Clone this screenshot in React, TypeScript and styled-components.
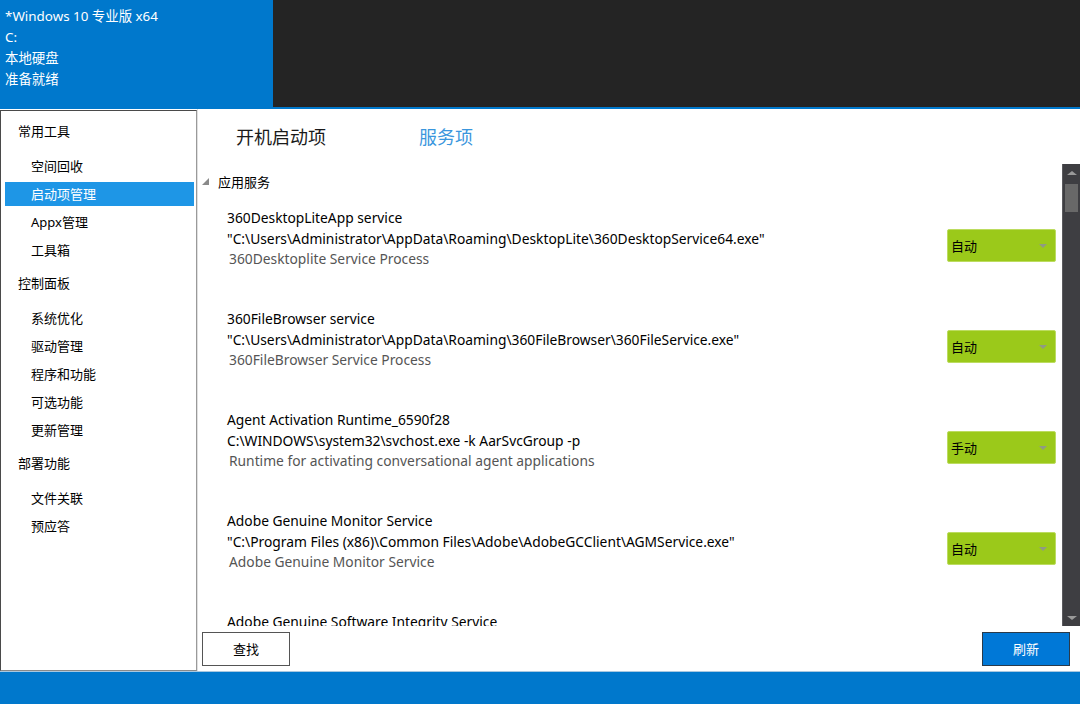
import React from 'react'
import styled, { createGlobalStyle } from 'styled-components'

const GlobalStyle = createGlobalStyle`
  html, body {
    margin: 0;
    padding: 0;
    width: 1080px;
    height: 704px;
    overflow: hidden;
    background: #ffffff;
  }
  body {
    font-family: 'Noto Sans', 'Noto Sans CJK SC', sans-serif;
    font-size: 13px;
    color: #000;
  }
`

const Shell = styled.div`
  width: 1080px;
  height: 704px;
  display: flex;
  flex-direction: column;
`

const Header = styled.header`
  display: flex;
  height: 109px;
  background: #0078cc;
`

const DiskInfo = styled.div`
  width: 273px;
  padding: 6px 0 0 5px;
  box-sizing: border-box;
  color: #fff;
  font-size: 13.4px;
  line-height: 21px;
`

const DarkArea = styled.div`
  flex: 1;
  height: 107px;
  background: #242424;
`

const Main = styled.div`
  flex: 1;
  display: flex;
  min-height: 0;
`

const Sidebar = styled.nav`
  width: 197px;
  box-sizing: border-box;
  margin-top: 1px;
  border: 1px solid #4a4a4a;
  border-right-color: #9a9a9a;
  border-bottom-color: #8a8a8a;
  padding: 10px 2px 0 4px;
  display: flex;
  flex-direction: column;
`

const GroupBlock = styled.div`
  margin-bottom: 7px;
`

const GroupTitle = styled.div`
  height: 20px;
  line-height: 20px;
  padding-left: 13px;
  margin-bottom: 13px;
`

const NavItem = styled.div<{ $active?: boolean }>`
  height: 24px;
  line-height: 24px;
  margin-bottom: 4px;
  padding-left: 26px;
  background: ${(p) => (p.$active ? '#1e96e6' : 'transparent')};
  color: ${(p) => (p.$active ? '#fff' : '#000')};
`

const Content = styled.section`
  flex: 1;
  display: flex;
  flex-direction: column;
  min-width: 0;
  border-left: 1px solid #e0e0e0;
`

const Tabs = styled.div`
  height: 55px;
  display: flex;
  align-items: center;
  padding: 0 0 2px 38px;
  box-sizing: border-box;
  gap: 93px;
`

const Tab = styled.div<{ $active?: boolean }>`
  font-size: 18px;
  font-family: 'Noto Sans CJK SC', sans-serif;
  color: ${(p) => (p.$active ? '#3a96dd' : '#1a1a1a')};
`

const ListArea = styled.div`
  height: 462px;
  display: flex;
`

const List = styled.div`
  flex: 1;
  overflow: hidden;
  padding-top: 7px;
`

const GroupHeader = styled.div`
  display: flex;
  align-items: center;
  height: 20px;
  padding-left: 4px;
  gap: 9px;
  margin-bottom: 17px;
`

const ServiceRow = styled.div`
  height: 101px;
  display: flex;
  align-items: flex-start;
  padding: 0 6px 0 29px;
`

const ServiceText = styled.div`
  flex: 1;
  font-size: 13.8px;
  line-height: 20.5px;
  white-space: nowrap;
`

const ServiceDesc = styled.div`
  color: #555;
  padding-left: 2px;
`

const Dropdown = styled.div`
  margin-top: 21px;
  width: 109px;
  height: 33px;
  box-sizing: border-box;
  background: #9bc91a;
  border: 1px solid #bcdc60;
  border-radius: 2px;
  display: flex;
  align-items: center;
  justify-content: space-between;
  padding: 0 8px 0 3px;
  font-family: 'Noto Sans CJK SC', sans-serif;
`

const Caret = styled.span`
  width: 0;
  height: 0;
  border-left: 4px solid transparent;
  border-right: 4px solid transparent;
  border-top: 4px solid #8f9a84;
`

const Scrollbar = styled.div`
  width: 18px;
  background: #3e3e42;
  border-left: 1px solid #5a5a5e;
  box-sizing: border-box;
  display: flex;
  flex-direction: column;
  align-items: center;
  padding: 7px 0 6px;
`

const ScrollThumb = styled.div`
  width: 13px;
  height: 28px;
  background: #686868;
  margin-top: 9px;
  flex: none;
`

const ScrollSpacer = styled.div`
  flex: 1;
`

const Arrow = styled.span<{ $down?: boolean }>`
  width: 0;
  height: 0;
  border-left: 5px solid transparent;
  border-right: 5px solid transparent;
  ${(p) => (p.$down ? 'border-top: 4px solid #9a9a9a;' : 'border-bottom: 4px solid #9a9a9a;')}
`

const Actions = styled.div`
  flex: 1;
  display: flex;
  align-items: center;
  justify-content: space-between;
  padding: 0 10px 0 4px;
`

const Button = styled.button<{ $primary?: boolean }>`
  width: 88px;
  height: 34px;
  box-sizing: border-box;
  padding: 0;
  line-height: 32px;
  border: 1px solid ${(p) => (p.$primary ? '#2a3a4a' : '#555')};
  background: ${(p) => (p.$primary ? '#0078d7' : '#fff')};
  color: ${(p) => (p.$primary ? '#fff' : '#000')};
  font-family: 'Noto Sans CJK SC', sans-serif;
  font-size: 13px;
  margin-top: 1px;
`

const Footer = styled.footer`
  height: 33px;
  background: #0078cc;
  border-top: 1px solid #a8c8e0;
  box-sizing: border-box;
`

const navGroups = [
  { title: '常用工具', items: ['空间回收', '启动项管理', 'Appx管理', '工具箱'] },
  { title: '控制面板', items: ['系统优化', '驱动管理', '程序和功能', '可选功能', '更新管理'] },
  { title: '部署功能', items: ['文件关联', '预应答'] },
]

// the last row is scrolled past the bottom edge, only its name peeks in
const services = [
  {
    name: '360DesktopLiteApp service',
    path: '"C:\\Users\\Administrator\\AppData\\Roaming\\DesktopLite\\360DesktopService64.exe"',
    desc: '360Desktoplite Service Process',
    mode: '自动',
  },
  {
    name: '360FileBrowser service',
    path: '"C:\\Users\\Administrator\\AppData\\Roaming\\360FileBrowser\\360FileService.exe"',
    desc: '360FileBrowser Service Process',
    mode: '自动',
  },
  {
    name: 'Agent Activation Runtime_6590f28',
    path: 'C:\\WINDOWS\\system32\\svchost.exe -k AarSvcGroup -p',
    desc: 'Runtime for activating conversational agent applications',
    mode: '手动',
  },
  {
    name: 'Adobe Genuine Monitor Service',
    path: '"C:\\Program Files (x86)\\Common Files\\Adobe\\AdobeGCClient\\AGMService.exe"',
    desc: 'Adobe Genuine Monitor Service',
    mode: '自动',
  },
  {
    name: 'Adobe Genuine Software Integrity Service',
    path: '',
    desc: '',
    mode: '',
  },
]

const App: React.FC = () => {
  return (
    <Shell>
      <GlobalStyle />
      <Header>
        <DiskInfo>
          <div>*Windows 10 专业版 x64</div>
          <div>C:</div>
          <div>本地硬盘</div>
          <div>准备就绪</div>
        </DiskInfo>
        <DarkArea />
      </Header>

      <Main>
        <Sidebar>
          {navGroups.map((g) => (
            <GroupBlock key={g.title}>
              <GroupTitle>{g.title}</GroupTitle>
              {g.items.map((item) => (
                <NavItem key={item} $active={item === '启动项管理'}>
                  {item}
                </NavItem>
              ))}
            </GroupBlock>
          ))}
        </Sidebar>

        <Content>
          <Tabs>
            <Tab>开机启动项</Tab>
            <Tab $active>服务项</Tab>
          </Tabs>

          <ListArea>
            <List>
              <GroupHeader>
                <svg width='7' height='7' viewBox='0 0 7 7'>
                  <polygon points='7,0 7,7 0,7' fill='#8a8a8a' />
                </svg>
                <span>应用服务</span>
              </GroupHeader>
              {services.map((s) => (
                <ServiceRow key={s.name}>
                  <ServiceText>
                    <div>{s.name}</div>
                    {s.path && <div>{s.path}</div>}
                    {s.desc && <ServiceDesc>{s.desc}</ServiceDesc>}
                  </ServiceText>
                  {s.mode && (
                    <Dropdown>
                      <span>{s.mode}</span>
                      <Caret />
                    </Dropdown>
                  )}
                </ServiceRow>
              ))}
            </List>
            <Scrollbar>
              <Arrow />
              <ScrollThumb />
              <ScrollSpacer />
              <Arrow $down />
            </Scrollbar>
          </ListArea>

          <Actions>
            <Button>查找</Button>
            <Button $primary>刷新</Button>
          </Actions>
        </Content>
      </Main>

      <Footer />
    </Shell>
  )
}

export default App
